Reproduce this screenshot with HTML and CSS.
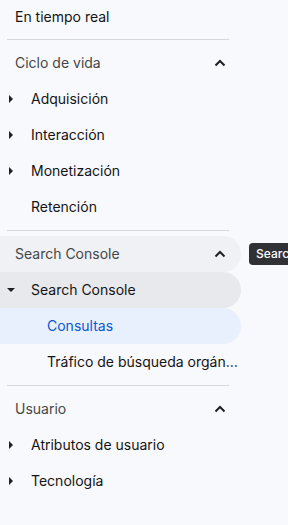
FILE: index.html
```html
<!DOCTYPE html>
<html lang="es">
<head>
<meta charset="utf-8">
<link rel="stylesheet" href="styles.css">
</head>
<body>
<nav class="nav">
  <div class="row top">En tiempo real</div>
  <div class="divider"></div>

  <div class="row header"><span class="label">Ciclo de vida</span><svg class="chev" viewBox="0 0 12 8"><path d="M1.5 6.5 L6 2 L10.5 6.5" /></svg></div>
  <div class="row child"><svg class="tri" viewBox="0 0 6 10"><path d="M1 1 L5 5 L1 9 Z"/></svg><span class="label">Adquisición</span></div>
  <div class="row child"><svg class="tri" viewBox="0 0 6 10"><path d="M1 1 L5 5 L1 9 Z"/></svg><span class="label">Interacción</span></div>
  <div class="row child"><svg class="tri" viewBox="0 0 6 10"><path d="M1 1 L5 5 L1 9 Z"/></svg><span class="label">Monetización</span></div>
  <div class="row child"><span class="tri-space"></span><span class="label">Retención</span></div>
  <div class="divider"></div>

  <div class="row header pill hovered"><span class="label">Search Console</span><svg class="chev" viewBox="0 0 12 8"><path d="M1.5 6.5 L6 2 L10.5 6.5" /></svg></div>
  <div class="row child pill open"><svg class="tri down" viewBox="0 0 10 6"><path d="M1 1 L9 1 L5 5 Z"/></svg><span class="label">Search Console</span></div>
  <div class="row grandchild pill active"><span class="label">Consultas</span></div>
  <div class="row grandchild"><span class="label ellip">Tráfico de búsqueda orgánica</span></div>
  <div class="divider"></div>

  <div class="row header"><span class="label">Usuario</span><svg class="chev" viewBox="0 0 12 8"><path d="M1.5 6.5 L6 2 L10.5 6.5" /></svg></div>
  <div class="row child"><svg class="tri" viewBox="0 0 6 10"><path d="M1 1 L5 5 L1 9 Z"/></svg><span class="label">Atributos de usuario</span></div>
  <div class="row child"><svg class="tri" viewBox="0 0 6 10"><path d="M1 1 L5 5 L1 9 Z"/></svg><span class="label">Tecnología</span></div>
</nav>
<div class="tooltip">Search Console</div>
</body>
</html>
```
FILE: styles.css
```css
html, body {
  margin: 0;
  padding: 0;
  height: 100%;
  overflow: hidden;
}
body {
  background: #f8f9fc;
  font-family: Inter, Roboto, "Noto Sans", sans-serif;
  font-size: 14px;
  color: #141414;
  position: relative;
}
.nav {
  width: 241px;
  margin-top: -2px;
  display: flex;
  flex-direction: column;
}
.row {
  height: 36px;
  display: flex;
  align-items: center;
  box-sizing: border-box;
  white-space: nowrap;
}
.label {
  display: block;
  position: relative;
  top: -1px;
}
.top {
  padding-left: 15px;
}
.top, .top .label {
  position: relative;
}
.divider {
  height: 1px;
  background: #d6d8dc;
  margin: 5px 12px 5px 7px;
}
.header {
  padding-left: 15px;
  padding-right: 15px;
  justify-content: space-between;
  color: #444746;
}
.chev {
  width: 12px;
  height: 8px;
  fill: none;
  stroke: #1f1f1f;
  stroke-width: 2;
}
.child {
  padding-left: 8px;
}
.tri {
  width: 6px;
  height: 10px;
  fill: #1f1f1f;
  margin-right: 17px;
}
.tri.down {
  width: 10px;
  height: 6px;
  margin-left: -2px;
  margin-right: 15px;
}
.tri-space {
  width: 6px;
  margin-right: 17px;
}
.grandchild {
  padding-left: 47px;
  padding-right: 3px;
}
.pill {
  border-radius: 0 18px 18px 0;
}
.hovered {
  background: #f0f1f4;
}
.open {
  background: #e8e9ec;
}
.active {
  background: #e8f0fe;
  color: #0b57d0;
}
.ellip {
  overflow: hidden;
  text-overflow: ellipsis;
}
.tooltip {
  position: absolute;
  left: 249px;
  top: 243px;
  height: 22px;
  line-height: 22px;
  padding: 0 8px 0 7px;
  border-radius: 4px;
  background: #303134;
  color: #ffffff;
  font-size: 12px;
  font-weight: 500;
  white-space: nowrap;
}
```
